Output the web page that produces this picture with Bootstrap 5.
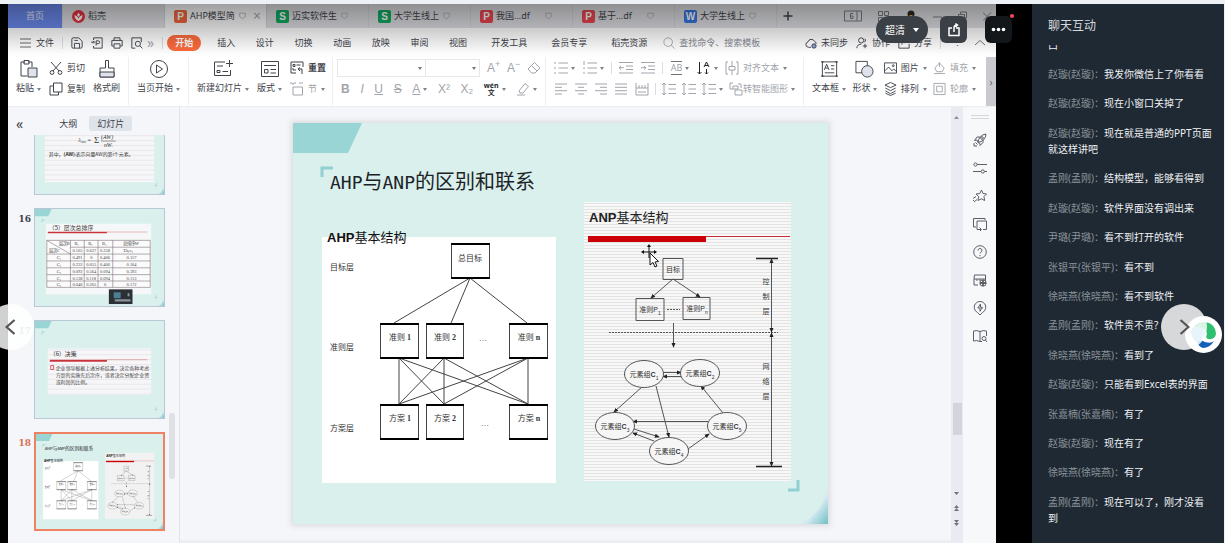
<!DOCTYPE html>
<html lang="zh-CN">
<head>
<meta charset="utf-8">
<meta name="viewport" content="width=device-width, initial-scale=1">
<title>聊天互动</title>
<link href="https://cdn.jsdelivr.net/npm/bootstrap@5.3.0/dist/css/bootstrap.min.css" rel="stylesheet">
<style>
body{font-family:"Noto Sans","Noto Sans CJK SC",sans-serif;font-size:9px;line-height:12px;background:#edf1f5;color:#3f434b}
button,input,select{font:inherit;color:inherit;background:none;border:0;padding:0;margin:0}
button{display:inline-flex;align-items:center;white-space:nowrap;flex:none}
a{color:inherit;text-decoration:none}
svg{display:block;flex:none}
.ic{width:14px;height:14px;fill:none;stroke:currentColor;stroke-width:1;overflow:visible}
.ic-lg{width:20px;height:20px}
.ic-xs{width:7px}
.page{height:100vh;padding-top:4px;padding-right:1px}
.stage{background:#000;padding:0 36px 0 8px;min-width:0}
.app-win{background:#f5f6f9;min-width:0}
.app-win::after{content:"";position:absolute;inset:0 0 auto 0;height:50px;background:linear-gradient(rgba(0,0,0,.36),rgba(0,0,0,.2) 48%,transparent);pointer-events:none}
/* document tabs */
.doc-tabs{height:24px;background:#dfe0e4}
.doc-tab{width:102px;padding-left:9px;gap:3px;border-right:1px solid #d3d4d8;height:24px}
.doc-tab.home-tab{width:55px;padding:0;justify-content:center;background:#6a88ec;color:#e8edfc}
.doc-tab.is-on{background:#fbfbfc}
.doc-tab .ttl{width:46px;overflow:hidden;text-align:left}
.faint{color:#a6a8ae}
.glyph{font-size:14px;line-height:14px}
.app-mark{width:13px;height:13px;border-radius:2px;color:#fff;font:bold 10px/13px "Liberation Sans",sans-serif;text-align:center}
.bg-s{background:#10ad63}.bg-p{background:#f2683c}.bg-r{background:#ee4650}.bg-w{background:#3678e8}
/* menu */
.menu-bar{height:29px;padding:0 10px 0 12px;background:#fdfdfd}
.menu-bar .ic{width:12px;height:12px;stroke-width:1.1}
.vr-line{width:1px;height:12px;background:#dcdde1;flex:none}
.main-pill{background:#fb6a3c;color:#fff;border-radius:8px;height:16px;padding:0 8px;font-weight:700}
.seven{width:250px}
.find-box{width:88px;outline:0}
.find-box::placeholder{color:#848892;opacity:1}
/* ribbon */
.ribbon{height:50px;background:#fff;border-bottom:1px solid #eceef1;min-width:0;overflow:hidden}
.grp{border-right:1px solid #eceef1;padding-top:2px;height:48px;flex:none}
.two-row{display:flex;flex-direction:column;gap:3px}
.two-row>*{height:18px;display:flex;align-items:center}
.tall{flex-direction:column;justify-content:space-between;height:39px}
.tall .lbl{height:16px}
.muted-ink{color:#a1a4aa}
.caret{display:inline-block;border:2px solid transparent;border-top:3px solid #7d8087;border-bottom:0;margin-left:3px}
.fbox{height:18px;border:1px solid #e6e7ea;appearance:none;background:url("data:image/svg+xml,%3Csvg xmlns='http://www.w3.org/2000/svg' width='4' height='3'%3E%3Cpath d='M0 0h4L2 3z' fill='%23777'/%3E%3C/svg%3E") no-repeat right 3px center}
.w-a{width:89px}.w-b{width:54px;border-left:0}
.font-grp{width:213px}.para-grp{width:258px}
.slide-grp{padding-right:6px}
.fmt{font:12px/14px "Liberation Sans",sans-serif}
.pinyin{flex-direction:column;font-size:7px;line-height:7px}
.draw-grp{padding:2px 10px 0 8px}
.draw-grp .ic{width:13px}
.draw-grp .ic-lg{width:19px}
.sliver{width:10px;background:#c9cacd;color:#666;font-size:10px}
/* slide list */
.thumbs{width:172px;border-right:1px solid #e1e3e8}
.thumb-head{height:28px;padding:5px 0 0 8px}
.seg{height:15px;padding:0 8px;border-radius:2px;line-height:15px;font-size:9px}
.seg.is-on{background:#dfe3ea}
.thumb-list{gap:13px}
.thumb-row{gap:3px;padding-left:9px}
.num{width:14px;text-align:right;font:bold 9px/14px "DejaVu Serif","Liberation Serif",serif;padding-top:4px}
.num.is-on{color:#d9704f}
.thumb{width:131px;height:99px;border:1px solid #b9c8d4;overflow:hidden}
.thumb svg{width:100%;height:100%}
.thumb.is-on{border:2px solid #ee8263}
.thumb.cut{height:60px;border-top:0;display:flex;align-items:flex-end}
.thumb.cut svg{height:97px}
.thumb-scroll{right:4px;top:306px;width:6px;height:66px;background:#dfdfe6;border-radius:3px}
/* canvas */
.canvas{padding:16px 10px 0 0;border-bottom:3px solid #eceef1;min-width:0}
.sheet{width:100%;max-width:535px;box-shadow:0 0 6px 2px #d9dbdf}
.sheet svg{width:100%;height:auto}
.vscroll{width:12px;background:#e9eaf2}
.vscroll i{width:9px;height:32px;top:296px;background:#d3d4dc}
.rail{width:33px;padding-top:8px;gap:14px;color:#5b5f66;background:#f7f8fa}
.grip{width:18px;height:4px;border:solid #d5d7db;border-width:1px 0}
/* player overlay */
.ctrl{background:#3b4046;color:#fff;height:27px;border-radius:6px;width:27px;justify-content:center}
.ctrl .ic{stroke-width:1.5}
.ctrl.wide{width:52px;border-radius:14px;font-size:10px}
.ctrl .caret{border-width:3px;border-top:4px solid #fff;border-bottom:0;margin-left:8px}
.ctrl.dark{background:#14171a}
.player{top:12px;right:20px;gap:12px;z-index:3}
.player .ctrl.dark{margin-left:6px}
.live-dot{width:4px;height:4px;border-radius:50%;background:#f0485c;top:-2px;right:-2px}
.turn{width:46px;height:46px;border-radius:50%;background:rgba(255,255,255,.82);color:#555;justify-content:center;z-index:4}
.turn svg{width:14px;height:18px}
.turn.prev{left:-12px;top:300px}
.turn.next{right:17px;top:300px}
.edge-logo{right:2px;top:312px;z-index:3}
/* chat */
.chat{width:192px;background:#1e2933;padding:14px 11px 17px 16px;color:#f0f1f3;font-size:10px;line-height:16px}
.chat h2{font-size:12px;line-height:16px;font-weight:400;margin:0 0 11px;color:#d5d8db}
.frag{height:6px;display:flex;align-items:flex-end;overflow:hidden;margin-bottom:15px}
.frag span{line-height:12px}
.who{color:#8b9299}
</style>
</head>
<body>
<svg width="0" height="0" class="position-absolute" aria-hidden="true">
<defs>
<symbol id="save" viewBox="0 0 14 14"><path d="M1 2.500Q1 1 2.500 1H9l4 4v6.500Q13 13 11.500 13h-9Q1 13 1 11.500zM4 13V7.500h6V13M4 4h4"/></symbol>
<symbol id="pdf" viewBox="0 0 14 14"><path d="M3 3.500V1h10v12H3v-2.500M6 10V4.500h2.500a1.600 1.600 0 0 1 0 3.300H6M0 6h4M2.500 4.500 4 6 2.500 7.500"/></symbol>
<symbol id="print" viewBox="0 0 14 14"><path d="M3.500 4V1h7v3M3 10.500H1V4h12v6.500h-2M3.500 8h7v5h-7z"/></symbol>
<symbol id="preview" viewBox="0 0 14 14"><path d="M5 13H1V1h11v5"/><circle cx="8" cy="8" r="3"/><path d="m10.300 10.300 3 3"/></symbol>
<symbol id="paste" viewBox="0 0 20 20"><path d="M6 3H2v14h6M13 8V3H9M5 1.500h5V5H5z"/><path d="M9 9h9v9H9z" fill="#dfe2ea"/></symbol>
<symbol id="cut" viewBox="0 0 14 14"><path d="m2 1 8 9M12 1 4 10"/><circle cx="3" cy="11.500" r="1.900"/><circle cx="11" cy="11.500" r="1.900"/></symbol>
<symbol id="copy" viewBox="0 0 14 14"><path d="M4.500 1H13v9H4.500zM4.500 4H1v9h8.500v-3"/></symbol>
<symbol id="brush" viewBox="0 0 20 20"><path d="M8.500 9V1.500h3V9H17v9H3V9z"/><path d="M3 13h14v5H3z" fill="#dfe2ea"/></symbol>
<symbol id="play" viewBox="0 0 20 20"><circle cx="10" cy="10" r="8.500"/><path d="M7.500 6v8l6-4z"/></symbol>
<symbol id="newslide" viewBox="0 0 20 20"><path d="M12 3H1.500v13.500h16V11M4 7h6M4 11.500h3v2H4zM9.500 12.500H15M16.500 1v7M13 4.500h7"/></symbol>
<symbol id="layout" viewBox="0 0 20 20"><path d="M1.500 2.500h17v15h-17zM4 6.500h12M4.500 10.500H8v3.500H4.500zM10.500 10.500H16M10.500 14H16"/></symbol>
<symbol id="reset" viewBox="0 0 14 14"><path d="M6 12H1V1h12v5M3 3.500h2v2H3zM6.500 4h4M3 7v2h3M8 8h4v5M8 8l2-1.500M8 8l2 2"/></symbol>
<symbol id="section" viewBox="0 0 14 14"><path d="M3 5h9.500v8H3zM0 1h2l1 1.500L4 1h2M9 1h4"/></symbol>
<symbol id="eraser" viewBox="0 0 14 14"><path d="m1 8 6.500-6.500L13 7l-5 5H4.500zM4.500 4.500 10 10"/></symbol>
<symbol id="marker" viewBox="0 0 14 14"><path d="m3 9 6-7.500 3.500 3L7 11H4zM1 13h8"/></symbol>
<symbol id="bullets" viewBox="0 0 14 14"><path d="M0 2h2M0 7h2M0 12h2M4.500 2H14M4.500 7H14M4.500 12H14"/></symbol>
<symbol id="numbers" viewBox="0 0 14 14"><path d="M1 0v4M0 7h2M0 12h2M4.500 2H14M4.500 7H14M4.500 12H14"/></symbol>
<symbol id="outdent" viewBox="0 0 14 14"><path d="M0 1.500h14M7 5h7M7 8.500h7M0 12h14M5 6.700H0M2 5 0 6.700 2 8.500"/></symbol>
<symbol id="indent" viewBox="0 0 14 14"><path d="M0 1.500h14M7 5h7M7 8.500h7M0 12h14M0 6.700h5M3 5l2 1.700L3 8.500"/></symbol>
<symbol id="sort" viewBox="0 0 14 14"><path d="M2.500 1v12M.5 11l2 2 2-2M7 6l2.500-5L12 6M8 4.500h3M9.500 8v5M8 11.500 9.500 13l1.500-1.500"/></symbol>
<symbol id="valign" viewBox="0 0 14 14"><path d="M3 1H1v12h2M11 1h2v12h-2M4 5.500h6v3.500H4zM7 0v5M7 9v5"/></symbol>
<symbol id="smart" viewBox="0 0 14 14"><path d="M4 1H1v6h3M4 4h5v3H4zM6 8h7v5H6zM9 2h3v4"/></symbol>
<symbol id="al" viewBox="0 0 14 14"><path d="M1 2h12M1 5.300h7M1 8.700h12M1 12h7"/></symbol>
<symbol id="ac" viewBox="0 0 14 14"><path d="M1 2h12M4 5.300h6M1 8.700h12M4 12h6"/></symbol>
<symbol id="ar" viewBox="0 0 14 14"><path d="M1 2h12M6 5.300h7M1 8.700h12M6 12h7"/></symbol>
<symbol id="aj" viewBox="0 0 14 14"><path d="M1 2h12M1 5.300h12M1 8.700h12M1 12h12"/></symbol>
<symbol id="ad" viewBox="0 0 14 14"><path d="M1 1v12h12V1M4 3v3M7 3v3M10 3v3M1 6h12M3 10h8"/></symbol>
<symbol id="ls" viewBox="0 0 14 14"><path d="M2 1v12M0 3l2-2 2 2M0 11l2 2 2-2M6.500 2.500H14M6.500 7H14M6.500 11.500H14"/></symbol>
<symbol id="tbox" viewBox="0 0 20 20"><path d="M2.500 2.500h15v15h-15z"/><path d="M1.500 1.500h2v2h-2zM16.500 1.500h2v2h-2zM1.500 16.500h2v2h-2zM16.500 16.500h2v2h-2z" fill="currentColor" stroke="none"/><path d="m4.500 11 2.500-6 2.500 6M5.500 9h3M11.500 6.500H15M11.500 10H15M5 14h10"/></symbol>
<symbol id="shapes" viewBox="0 0 20 20"><path d="M1 2h12v12H1z"/><circle cx="13" cy="12.500" r="6" fill="#dfe2ea"/></symbol>
<symbol id="image" viewBox="0 0 14 14"><path d="M.5 1.500h13v11H.5zM1 10l4-4 3.500 4 2-2 3 3"/><circle cx="10" cy="4.500" r="1"/></symbol>
<symbol id="layers" viewBox="0 0 14 14"><path d="m7 0 6 2.800L7 5.500 1 2.800zM1.500 6 7 8.800 12.500 6M1.500 9 7 12l5.500-3M1.500 11.500 7 14l5.500-2.500"/></symbol>
<symbol id="fill" viewBox="0 0 14 14"><path d="m2 7 5-5.500L12 7l-2 4H4zM1 13h12M7 1v5"/></symbol>
<symbol id="outline" viewBox="0 0 14 14"><path d="M1 1h12v12H1zM4 4h6v6H4z"/></symbol>
<symbol id="cloud" viewBox="0 0 14 14"><path d="M7 12H4a3.200 3.200 0 0 1-.5-6.300A4 4 0 0 1 11 5a3 3 0 0 1 2 3"/><circle cx="10.500" cy="10.500" r="2.500" fill="#8ea2dd"/></symbol>
<symbol id="people" viewBox="0 0 14 14"><circle cx="6" cy="4" r="3"/><path d="M1 13q0-4.500 5-4.500M8 10.500h5M10.500 8v5M10 2q2.500 1 0 4"/></symbol>
<symbol id="share" viewBox="0 0 14 14"><path d="M6 3H1v10h12V8M4.500 9q0-5 6-5M8 1l3.500 3L8 7"/></symbol>
<symbol id="find" viewBox="0 0 14 14"><circle cx="6" cy="6" r="5"/><path d="m9.500 9.500 4 4"/></symbol>
<symbol id="shield" viewBox="0 0 10 10"><path d="M1 1h8v5L5 9 1 6z"/></symbol>
<symbol id="rocket" viewBox="0 0 14 14"><path d="M5 9.500Q6 2 13 1q-.5 7-8 8.500zM5 9.500 4 7 1.500 7.500 4 4h3M5 9.500l2 1 0 2L10 9.500V7M1 10v3h3M2.500 9.500 4.500 11.500"/><circle cx="9" cy="5" r="1.300"/></symbol>
<symbol id="sliders" viewBox="0 0 14 14"><circle cx="2.500" cy="3.500" r="1.600"/><path d="M4 3.500h10M0 10.500h8M11.500 10.500H14"/><circle cx="9.800" cy="10.500" r="1.600"/></symbol>
<symbol id="star" viewBox="0 0 14 14"><path d="m8.500 1 1.500 3.500 3.500.5L11 7.500l.6 4-3.300-1.700L5 11.500l.6-4L3 5l3.800-.5zM0 9.500l3-2M1 13l3-2.500M0 12l1-1"/></symbol>
<symbol id="swap" viewBox="0 0 14 14"><path d="M3 10H.500V1.500H12V3M4 4h9.500v8.500H10M4 4v8.500h4M6.500 10.500l2 2-2 2"/></symbol>
<symbol id="help" viewBox="0 0 14 14"><circle cx="7" cy="7" r="6.300"/><path d="M5 5.500a2 2 0 1 1 2.800 1.800Q7 7.700 7 8.500M7 10v1.200"/></symbol>
<symbol id="pack" viewBox="0 0 14 14"><path d="M5 12H1V6M1.500 2h11v4H1zM4 6v2M7 6v2M12.500 6v2"/><circle cx="10" cy="10" r="3.200"/><path d="M7 10h6M10 7v6" stroke-width="1.800"/></symbol>
<symbol id="bulb" viewBox="0 0 14 14"><path d="M4.500 11.500a5.800 5.800 0 1 1 5 0L7 14zM7.500 3 4.800 7H7v3.300L9.500 6.300H7.500z"/></symbol>
<symbol id="book" viewBox="0 0 14 14"><path d="M7 2.500Q4 1 .5 2v10q3.500-1 6.500.500zM7 2.500Q10 1 13.500 2v5M7 12.500h2"/><circle cx="11" cy="9.500" r="2"/><path d="m12.500 11 1.500 2"/></symbol>
<marker id="ah" viewBox="0 0 6 6" refX="5" refY="3" markerWidth="5" markerHeight="5" orient="auto-start-reverse"><path d="M0 .5 6 3 0 5.500z" fill="#222"/></marker>
<pattern id="rule" width="8" height="3" patternUnits="userSpaceOnUse"><path fill="#f8f8f8" d="M0 0h8v3H0z"/><path fill="#e2e2e3" d="M0 2h8v1H0z"/></pattern>
<pattern id="rule2" width="8" height="5" patternUnits="userSpaceOnUse"><path fill="#f6f6f8" d="M0 0h8v5H0z"/><path fill="#e9e6ea" d="M0 4h8v1H0z"/></pattern>
<linearGradient id="curl" x1="0" y1="0" x2="1" y2="1"><stop offset=".45" stop-color="#daf0ee"/><stop offset=".62" stop-color="#d4e8f2"/><stop offset="1" stop-color="#6fc0c0"/></linearGradient>
<symbol id="deck" viewBox="0 0 535 401" preserveAspectRatio="none"><path fill="#daf0ed" d="M0 0h535v401H0z"/><path fill="#9ad5d5" d="M0 0h69L55 30H0z"/><path fill="none" stroke="#92cfd1" stroke-width="3" d="M29 54V45h11M495 367h10v-10"/><path fill="url(#curl)" d="M505 401q24-8 30-38v38z"/></symbol>
</defs>
</svg>

<div class="page d-flex">
<main class="stage flex-grow-1 position-relative d-flex overflow-hidden">
<div class="app-win flex-grow-1 d-flex flex-column position-relative overflow-hidden">

<div class="doc-tabs d-flex align-items-center overflow-hidden flex-shrink-0">
<button class="doc-tab home-tab">首页</button>
<button class="doc-tab"><svg width="13" height="13" viewBox="0 0 13 13"><circle cx="6.500" cy="6.500" r="6.500" fill="#e9303d"/><path d="M6.500 11Q2.500 9.500 2.500 5q3 .5 4 3.500 1-3 4-3.500 0 4.500-4 6zM6.500 2.500 5 5l1.500 2L8 5z" fill="#fff"/></svg>稻壳</button>
<button class="doc-tab is-on"><span class="app-mark bg-p">P</span><span class="ttl">AHP模型简</span><svg class="ic ic-xs faint"><use href="#shield"/></svg><span class="ps-1 faint glyph">×</span></button>
<button class="doc-tab"><span class="app-mark bg-s">S</span><span class="ttl">迈实软件生</span><svg class="ic ic-xs faint"><use href="#shield"/></svg></button>
<button class="doc-tab"><span class="app-mark bg-s">S</span><span class="ttl">大学生线上</span><svg class="ic ic-xs faint"><use href="#shield"/></svg></button>
<button class="doc-tab"><span class="app-mark bg-r">P</span><span class="ttl">我国...df</span><svg class="ic ic-xs faint"><use href="#shield"/></svg></button>
<button class="doc-tab"><span class="app-mark bg-r">P</span><span class="ttl">基于...df</span><svg class="ic ic-xs faint"><use href="#shield"/></svg></button>
<button class="doc-tab"><span class="app-mark bg-w">W</span><span class="ttl">大学生线上</span><svg class="ic ic-xs faint"><use href="#shield"/></svg></button>
<button class="ps-1" aria-label="新建"><svg class="ic" viewBox="0 0 14 14"><path d="M7 2.500v9M2.500 7h9" stroke-width="1.500"/></svg></button>
<div class="ms-auto d-flex align-items-center gap-3 pe-1">
<svg width="18" height="12" viewBox="0 0 18 12" fill="none" stroke="#777a80"><path d="M.5 1h17v10H.5zM13 1v10M9 3.500H6.500v5H9V6H7"/></svg>
<svg width="11" height="11" viewBox="0 0 11 11" fill="none" stroke="#777a80"><path d="M.5 .5h4v4h-4zM6.500.5h4v4h-4zM.5 6.500h4v4h-4zM6.500 6.500h4v4h-4z"/></svg>
<svg width="12" height="13" viewBox="0 0 12 13"><circle cx="6" cy="4" r="3.500" fill="#2b2723"/><path d="M1 13q0-6 5-6t5 6z" fill="#39322c"/><path d="M4 5h4l-2 2z" fill="#e0a03a"/></svg>
<svg width="9" height="11" viewBox="0 0 9 11" fill="none" stroke="#777a80"><path d="M0 6h9"/></svg>
<svg width="9" height="11" viewBox="0 0 9 11" fill="none" stroke="#777a80"><path d="M.5 3.500h6v6h-6zM2.500 3V1h6v6H7"/></svg>
<svg width="9" height="11" viewBox="0 0 9 11" fill="none" stroke="#777a80"><path d="m0 1.500 8 8M8 1.500l-8 8"/></svg>
</div>
</div>

<nav class="menu-bar d-flex align-items-center overflow-hidden flex-shrink-0">
<button><svg class="me-1" width="12" height="10" viewBox="0 0 12 10" stroke="#666"><path d="M0 1h11M0 5h11M0 9h11"/></svg>文件</button>
<span class="vr-line mx-2"></span>
<div class="d-flex gap-2">
<button aria-label="保存"><svg class="ic"><use href="#save"/></svg></button>
<button aria-label="输出PDF"><svg class="ic"><use href="#pdf"/></svg></button>
<button aria-label="打印"><svg class="ic"><use href="#print"/></svg></button>
<button aria-label="预览"><svg class="ic"><use href="#preview"/></svg></button>
</div>
<span class="faint glyph px-1">»</span>
<span class="vr-line mx-1"></span>
<button class="main-pill">开始</button>
<div class="seven d-flex justify-content-between ms-3 flex-shrink-0"><a href="#">插入</a><a href="#">设计</a><a href="#">切换</a><a href="#">动画</a><a href="#">放映</a><a href="#">审阅</a><a href="#">视图</a></div>
<div class="d-flex ms-4 flex-shrink-0 gap-4"><a href="#">开发工具</a><a href="#">会员专享</a><a href="#">稻壳资源</a></div>
<label class="d-flex align-items-center ms-3 gap-1 flex-shrink-0"><svg class="ic faint"><use href="#find"/></svg><input class="find-box" aria-label="查找" placeholder="查找命令、搜索模板"></label>
<div class="ms-auto d-flex align-items-center gap-2">
<button class="gap-1"><svg class="ic"><use href="#cloud"/></svg>未同步</button>
<button class="gap-1"><svg class="ic"><use href="#people"/></svg>协作</button>
<button class="gap-1"><svg class="ic"><use href="#share"/></svg>分享</button>
<span class="vr-line"></span><button class="mx-1" aria-label="更多">⋮</button>
<button aria-label="收起"><svg width="12" height="8" viewBox="0 0 12 8" fill="none" stroke="#777"><path d="m1 6 5-4.500L11 6"/></svg></button>
</div>
</nav>

<div class="ribbon d-flex flex-shrink-0">
<div class="grp d-flex ps-2 pe-2 gap-2">
<button class="tall"><svg class="ic ic-lg"><use href="#paste"/></svg><span class="lbl">粘贴<i class="caret"></i></span></button>
<div class="two-row"><button class="gap-1"><svg class="ic"><use href="#cut"/></svg>剪切</button><button class="gap-1"><svg class="ic"><use href="#copy"/></svg>复制</button></div>
<button class="tall"><svg class="ic ic-lg"><use href="#brush"/></svg><span class="lbl">格式刷</span></button>
</div>
<div class="grp px-2"><button class="tall"><svg class="ic ic-lg"><use href="#play"/></svg><span class="lbl">当页开始<i class="caret"></i></span></button></div>
<div class="grp slide-grp d-flex ps-2 gap-2">
<button class="tall"><svg class="ic ic-lg"><use href="#newslide"/></svg><span class="lbl">新建幻灯片<i class="caret"></i></span></button>
<button class="tall"><svg class="ic ic-lg"><use href="#layout"/></svg><span class="lbl">版式<i class="caret"></i></span></button>
<div class="two-row"><button class="gap-1"><svg class="ic"><use href="#reset"/></svg><b>重置</b></button><button class="gap-1 muted-ink"><svg class="ic"><use href="#section"/></svg>节<i class="caret ms-0"></i></button></div>
</div>
<div class="grp font-grp two-row px-1 muted-ink">
<div class="justify-content-between"><div class="d-flex"><select class="fbox w-a" aria-label="字体"></select><select class="fbox w-b" aria-label="字号"></select></div><button class="fmt">A<sup>+</sup></button><button class="fmt">A<sup>−</sup></button><button aria-label="清除"><svg class="ic"><use href="#eraser"/></svg></button></div>
<div class="justify-content-between ps-1 pe-1"><button class="fmt fw-bold">B</button><button class="fmt fst-italic">I</button><button class="fmt text-decoration-underline">U</button><button class="fmt text-decoration-line-through">S</button><button class="fmt"><u>A</u><i class="caret"></i></button><button class="fmt">X²</button><button class="fmt">X₂</button><button class="text-dark fw-bold"><span class="pinyin d-flex align-items-center"><span>wén</span><span>文</span></span><i class="caret"></i></button><button aria-label="突出显示"><svg class="ic"><use href="#marker"/></svg><i class="caret"></i></button></div>
</div>
<div class="grp para-grp two-row px-2 muted-ink">
<div class="justify-content-between"><button aria-label="项目符号"><svg class="ic"><use href="#bullets"/></svg><i class="caret"></i></button><button aria-label="编号"><svg class="ic"><use href="#numbers"/></svg><i class="caret"></i></button><span class="vr-line"></span><button aria-label="减少缩进"><svg class="ic"><use href="#outdent"/></svg></button><button aria-label="增加缩进"><svg class="ic"><use href="#indent"/></svg></button><span class="vr-line"></span><button><span class="border-top border-bottom border-secondary">AB</span><i class="caret"></i></button><button class="text-dark" aria-label="文字方向"><svg class="ic"><use href="#sort"/></svg><i class="caret"></i></button><button class="gap-1"><svg class="ic"><use href="#valign"/></svg>对齐文本<i class="caret ms-0 me-2"></i></button></div>
<div class="justify-content-between"><button aria-label="左对齐"><svg class="ic"><use href="#al"/></svg></button><button aria-label="居中"><svg class="ic"><use href="#ac"/></svg></button><button aria-label="右对齐"><svg class="ic"><use href="#ar"/></svg></button><button aria-label="两端对齐"><svg class="ic"><use href="#aj"/></svg></button><button aria-label="分散对齐"><svg class="ic"><use href="#ad"/></svg></button><span class="vr-line"></span><button aria-label="段前"><svg class="ic"><use href="#ls"/></svg></button><button aria-label="段后"><svg class="ic"><use href="#ls"/></svg></button><button aria-label="行距"><svg class="ic"><use href="#ls"/></svg><i class="caret"></i></button><button><svg class="ic"><use href="#smart"/></svg>转智能图形<i class="caret"></i></button></div>
</div>
<div class="draw-grp d-flex gap-1 flex-grow-1 justify-content-between">
<button class="tall"><svg class="ic ic-lg"><use href="#tbox"/></svg><span class="lbl">文本框<i class="caret"></i></span></button>
<button class="tall"><svg class="ic ic-lg"><use href="#shapes"/></svg><span class="lbl">形状<i class="caret"></i></span></button>
<div class="two-row"><button class="gap-1"><svg class="ic"><use href="#image"/></svg>图片<i class="caret ms-0"></i></button><button class="gap-1"><svg class="ic"><use href="#layers"/></svg>排列<i class="caret ms-0"></i></button></div>
<div class="two-row muted-ink"><button class="gap-1"><svg class="ic"><use href="#fill"/></svg>填充<i class="caret ms-0"></i></button><button class="gap-1"><svg class="ic"><use href="#outline"/></svg>轮廓<i class="caret ms-0"></i></button></div>
</div>
<button class="sliver justify-content-center" aria-label="向右">›</button>
</div>

<div class="d-flex flex-grow-1 overflow-hidden">
<aside class="thumbs position-relative flex-shrink-0">
<div class="thumb-head d-flex align-items-center">
<button class="glyph" aria-label="收起面板">«</button>
<button class="seg ms-4 me-1"><span class="ps-1">大纲</span></button><button class="seg is-on">幻灯片</button>
</div>
<div class="thumb-list d-flex flex-column">
<div class="d-flex thumb-row"><span class="num"></span><div class="thumb cut"><svg viewBox="0 0 131 99" preserveAspectRatio="none"><use href="#deck" width="131" height="99"/><path fill="url(#rule2)" d="M10 12h111v75H10z"/><g font-family="Liberation Serif,serif" font-style="italic" font-size="6" fill="#333"><text x="44" y="46">λ<tspan font-size="3" dy="1">max</tspan><tspan dy="-1"> =</tspan></text><text x="60" y="47" font-size="9" font-style="normal">Σ</text><text x="67" y="43">(AW)</text><text x="70" y="51">nWᵢ</text></g><path d="M67 45h15" stroke="#333" stroke-width=".5"/><text x="14" y="60" font-size="5" fill="#333" font-family="Noto Sans CJK SC,sans-serif">其中，<tspan font-weight="700">(AW)</tspan>ᵢ表示向量AW的第i个元素。</text></svg></div></div>
<div class="d-flex thumb-row"><span class="num">16</span><div class="thumb"><svg viewBox="0 0 131 99" preserveAspectRatio="none"><use href="#deck" width="131" height="99"/><path fill="#f6f7f8" d="M11 15h107v72H11z"/><text x="14" y="21" font-size="6" fill="#333" font-family="Noto Sans CJK SC,sans-serif">（5）层次总排序</text><path stroke="#c9343c" stroke-width="1.500" d="M13 24h60"/><path stroke="#d98a90" stroke-width=".6" d="M73 23.500h41"/>
<path fill="#fbfbfb" stroke="#7d7077" stroke-width=".6" d="M12 32h105v48H12zM36 32v48M50 32v48M64 32v48M79 32v48M36 39h81M12 46h105M12 53h105M12 60h105M12 67h105M12 73.500h105M12 32l24 14"/>
<g font-family="Liberation Serif,serif" font-size="4.500" fill="#444"><text x="24" y="37">层次B</text><text x="14" y="44">层次C</text><text x="40" y="37">B₁</text><text x="54" y="37">B₂</text><text x="68" y="37">B₃</text><text x="89" y="37">总排序W</text><text x="38" y="44">0.105</text><text x="52" y="44">0.637</text><text x="66" y="44">0.258</text><text x="90" y="44">Σbⱼcᵢⱼ</text>
<text x="22" y="51">C₁</text><text x="38" y="51">0.491</text><text x="56" y="51">0</text><text x="66" y="51">0.406</text><text x="93" y="51">0.157</text>
<text x="22" y="58">C₂</text><text x="38" y="58">0.232</text><text x="52" y="58">0.055</text><text x="66" y="58">0.406</text><text x="93" y="58">0.164</text>
<text x="22" y="65">C₃</text><text x="38" y="65">0.092</text><text x="52" y="65">0.564</text><text x="66" y="65">0.094</text><text x="93" y="65">0.393</text>
<text x="22" y="72">C₄</text><text x="38" y="72">0.138</text><text x="52" y="72">0.118</text><text x="66" y="72">0.094</text><text x="93" y="72">0.113</text>
<text x="22" y="78.500">C₅</text><text x="38" y="78.500">0.046</text><text x="52" y="78.500">0.265</text><text x="70" y="78.500">0</text><text x="93" y="78.500">0.172</text></g>
<path fill="#2b3036" d="M75 82h24v15H75z"/><path fill="#4d7f94" d="M80 85h7v6h-7z"/><path fill="#8b949b" d="M81 92h16v2.500H81zM94 86h2v3h-2z"/></svg></div></div>
<div class="d-flex thumb-row"><span class="num faint">17</span><div class="thumb"><svg viewBox="0 0 131 99" preserveAspectRatio="none"><use href="#deck" width="131" height="99"/><path fill="url(#rule2)" d="M13 28h105v47H13z"/><text x="15" y="36" font-size="6" fill="#333" font-family="Noto Sans CJK SC,sans-serif">（6）决策</text><path stroke="#c9343c" stroke-width="2" d="M15 40.500h58"/><path stroke="#d98a90" stroke-width=".7" d="M73 39.500h41"/><path fill="none" stroke="#c9343c" stroke-width=".8" d="M16 45.500h3v4h-3z"/><g font-size="5" fill="#444" font-family="Noto Sans CJK SC,sans-serif"><text x="21" y="50">企业领导根据上述分析结果，决定各种考虑</text><text x="21" y="57">方案的实施先后次序，或者决定分配企业资</text><text x="21" y="64">或利润的比例。</text></g></svg></div></div>
<div class="d-flex thumb-row"><span class="num is-on">18</span><div class="thumb is-on"><svg viewBox="0 0 535 401" preserveAspectRatio="none"><use href="#slide18"/></svg></div></div>
</div>
<div class="thumb-scroll position-absolute"></div>
</aside>

<section class="canvas flex-grow-1 d-flex justify-content-center align-items-start">
<div class="sheet"><svg viewBox="0 0 535 401" role="img" aria-label="AHP与ANP的区别和联系">
<g id="slide18" font-family="Liberation Serif,Noto Sans CJK SC,serif">
<use href="#deck" width="535" height="401"/>
<text x="37" y="66" font-size="20" fill="#1c2326" font-family="Noto Sans CJK SC,sans-serif"><tspan font-family="DejaVu Sans Mono" font-size="18">AHP</tspan>与<tspan font-family="DejaVu Sans Mono" font-size="18">ANP</tspan>的区别和联系</text>
<path fill="#fff" d="M29 114h234v246H29z"/>
<text x="34" y="119" font-size="13" fill="#111" font-family="Liberation Sans,Noto Sans CJK SC,sans-serif"><tspan font-weight="700">AHP</tspan>基本结构</text>
<path fill="none" stroke="#444" stroke-width="1" d="M158.500 120v35M196.500 120v35M87.500 200v35M125.500 200v35M133.500 200v35M170.500 200v35M216.500 200v35M254.500 200v35M87.500 281v35M125.500 281v35M133.500 281v35M170.500 281v35M216.500 281v35M254.500 281v35M177 155l-76 45M177 155l-19 45M177 155l57 45M106 235v46M151 235v46M235 235v46M106 235l45 46M106 235l129 46M151 235l-45 46M151 235l84 46M235 235l-129 46M235 235l-84 46"/>
<path stroke="#000" stroke-width="2" d="M158 121h39M158 155h39M87 201h39M133 201h38M216 201h39M87 235h39M133 235h38M216 235h39M87 282h39M133 282h38M216 282h39M87 316h39M133 316h38M216 316h39"/>
<g font-size="8" fill="#333"><text x="37" y="147">目标层</text><text x="37" y="227">准则层</text><text x="37" y="308">方案层</text><g text-anchor="middle"><text x="177" y="138">总目标</text><text x="107" y="217">准则 <tspan font-weight="700">1</tspan></text><text x="152" y="217">准则 <tspan font-weight="700">2</tspan></text><text x="236" y="217">准则 <tspan font-weight="700">n</tspan></text><text x="107" y="298">方案 <tspan font-weight="700">1</tspan></text><text x="152" y="298">方案 <tspan font-weight="700">2</tspan></text><text x="236" y="298">方案 <tspan font-weight="700">n</tspan></text><text x="190" y="218">…</text><text x="192" y="303">…</text></g></g>
<path fill="url(#rule)" d="M291 79h207v279H291z"/>
<text x="296" y="99" font-size="13" fill="#222" font-family="Liberation Sans,Noto Sans CJK SC,sans-serif"><tspan font-weight="700">ANP</tspan>基本结构</text>
<path fill="#cb0007" d="M295 113h118v6H295z"/><path stroke="#c0303a" d="M413 113.500h84"/>
<g fill="none" stroke="#555" stroke-width="1"><path d="M370 135.500h20v21h-20zM343 175.500h28v22h-28zM390 174.500h27v22h-27z"/><path d="M463 135.500h22M463 343.500h26" stroke="#222" stroke-width="1.500"/><path stroke-dasharray="2 1" d="M316 209.500h169M374 186.500h13"/>
<g marker-end="url(#ah)"><path d="M380 156l-22 19"/><path d="M380 156l27 18"/><path d="M380.500 200v24"/><path d="M370 249.500h18"/><path d="M388 253.500h-18"/><path d="M349 264l-28 25"/><path d="M363 263l13 51"/><path d="M430 290l-22-27"/><path d="M415 298.500h-75"/><path d="M341 306l25 8"/><path d="M361 318l-21-8"/><path d="M395 326l21-15"/></g>
<path marker-start="url(#ah)" marker-end="url(#ah)" d="M478.500 136v73"/><path marker-start="url(#ah)" marker-end="url(#ah)" d="M478.500 210v133"/>
<g fill="#f6f6f6"><ellipse cx="351" cy="251" rx="19.500" ry="13.500"/><ellipse cx="407" cy="250" rx="19.500" ry="13.500"/><ellipse cx="322" cy="303" rx="19.500" ry="13.500"/><ellipse cx="376" cy="328" rx="19.500" ry="13.500"/><ellipse cx="434" cy="303" rx="19.500" ry="13.500"/></g></g>
<g text-anchor="middle" font-size="7" fill="#333" font-family="Liberation Sans,Noto Sans CJK SC,sans-serif"><text x="380" y="149">目标</text><text x="357" y="189">准则P<tspan font-size="5" dy="3">1</tspan></text><text x="404" y="188">准则P<tspan font-size="5" dy="3">n</tspan></text><text x="473" y="161">控</text><text x="473" y="176">制</text><text x="473" y="191">层</text><text x="473" y="246">网</text><text x="473" y="261">络</text><text x="473" y="276">层</text>
<text x="351" y="254">元素组<tspan font-weight="700">C</tspan><tspan font-size="5" dy="3">1</tspan></text><text x="407" y="253">元素组<tspan font-weight="700">C</tspan><tspan font-size="5" dy="3">2</tspan></text><text x="322" y="306">元素组<tspan font-weight="700">C</tspan><tspan font-size="5" dy="3">3</tspan></text><text x="376" y="331">元素组<tspan font-weight="700">C</tspan><tspan font-size="5" dy="3">4</tspan></text><text x="434" y="306">元素组<tspan font-weight="700">C</tspan><tspan font-size="5" dy="3">5</tspan></text></g>
</g>
<path d="M356 123v12M350 129h12" stroke="#111"/><path fill="#111" d="m356 121 2 3h-4zM348 129l3-2v4zM364 129l-3-2v4z"/><path fill="#fff" stroke="#111" d="m357 130 0 12 3-2.500 2 4.500 2-1-2-4 3.500-.5z"/>
</svg></div>
</section>

<div class="vscroll position-relative d-flex flex-column align-items-center justify-content-between flex-shrink-0">
<svg class="mt-2" width="6" height="5" fill="#8e9098"><path d="M0 4h5L2.500 1z"/></svg>
<i class="position-absolute"></i>
<svg class="mb-3" width="6" height="36" fill="#70737b"><path d="M0 1h5L2.500 4zM0 17h5l-2.500-3zM0 20h5l-2.500-3zM0 29h5l-2.500 3zM0 32h5l-2.500 3z"/></svg>
</div>
<div class="rail d-flex flex-column align-items-center flex-shrink-0">
<span class="grip"></span>
<button aria-label="动画"><svg class="ic"><use href="#rocket"/></svg></button><button aria-label="设置"><svg class="ic"><use href="#sliders"/></svg></button><button aria-label="美化"><svg class="ic"><use href="#star"/></svg></button><button aria-label="切换"><svg class="ic"><use href="#swap"/></svg></button><button aria-label="帮助"><svg class="ic"><use href="#help"/></svg></button><button aria-label="素材"><svg class="ic"><use href="#pack"/></svg></button><button aria-label="灵感"><svg class="ic"><use href="#bulb"/></svg></button><button aria-label="阅读"><svg class="ic"><use href="#book"/></svg></button>
</div>
</div>
</div>

<div class="player position-absolute d-flex">
<button class="ctrl wide">超清<i class="caret"></i></button>
<button class="ctrl" aria-label="投屏"><svg class="ic" viewBox="0 0 14 14"><path d="M5 5H2v7.500h10V5H9M7 9V5q0-3 3-3M8.500.5l2 1.500-2 2"/></svg></button>
<button class="ctrl dark position-relative" aria-label="更多"><svg width="15" height="5" fill="#fff"><circle cx="2.500" cy="2.500" r="1.800"/><circle cx="7.500" cy="2.500" r="1.800"/><circle cx="12.500" cy="2.500" r="1.800"/></svg><span class="live-dot position-absolute"></span></button>
</div>
<button class="turn prev position-absolute" aria-label="上一页"><svg viewBox="0 0 16 20" fill="none" stroke="#555" stroke-width="2.500"><path d="M12 2 3 10l9 8"/></svg></button>
</main>

<aside class="chat position-relative d-flex flex-column flex-shrink-0">
<h2>聊天互动</h2>
<div class="frag"><span>口</span></div>
<div class="flex-grow-1 d-flex flex-column justify-content-between">
<div><span class="who">赵璇(赵璇)：</span>我发你微信上了你看看</div>
<div><span class="who">赵璇(赵璇)：</span>现在小窗口关掉了</div>
<div><span class="who">赵璇(赵璇)：</span>现在就是普通的PPT页面就这样讲吧</div>
<div><span class="who">孟刚(孟刚)：</span>结构模型，能够看得到</div>
<div><span class="who">赵璇(赵璇)：</span>软件界面没有调出来</div>
<div><span class="who">尹璐(尹璐)：</span>看不到打开的软件</div>
<div><span class="who">张银平(张银平)：</span>看不到</div>
<div><span class="who">徐晓燕(徐晓燕)：</span>看不到软件</div>
<div><span class="who">孟刚(孟刚)：</span>软件贵不贵?</div>
<div><span class="who">徐晓燕(徐晓燕)：</span>看到了</div>
<div><span class="who">赵璇(赵璇)：</span>只能看到Excel表的界面</div>
<div><span class="who">张嘉楠(张嘉楠)：</span>有了</div>
<div><span class="who">赵璇(赵璇)：</span>现在有了</div>
<div><span class="who">徐晓燕(徐晓燕)：</span>有了</div>
<div><span class="who">孟刚(孟刚)：</span>现在可以了，刚才没看到</div>
</div>
<svg class="edge-logo position-absolute" width="37" height="37" viewBox="0 0 37 37"><circle cx="18.500" cy="18.500" r="18.500" fill="#fff"/><path d="M18 6q12 0 13 12-1 6-8 5-3-1-1-5-1-6-9-6-4 0-7 5Q8 7 18 6z" fill="#2fbf71"/><path d="M6 17q1-8 9-6 5 2 5 8-5 2-1 8-11 1-13-10z" fill="#7fc4ec"/><path d="M12 26q5-2 8 0 6 2 9-1-4 7-11 7-4-1-6-6z" fill="#1460b8"/></svg>
<button class="turn next position-absolute" aria-label="下一页"><svg viewBox="0 0 16 20" fill="none" stroke="#555" stroke-width="2.500"><path d="m4 2 9 8-9 8"/></svg></button>
</aside>
</div>
<script src="https://cdn.jsdelivr.net/npm/bootstrap@5.3.0/dist/js/bootstrap.bundle.min.js"></script>
</body>
</html>
